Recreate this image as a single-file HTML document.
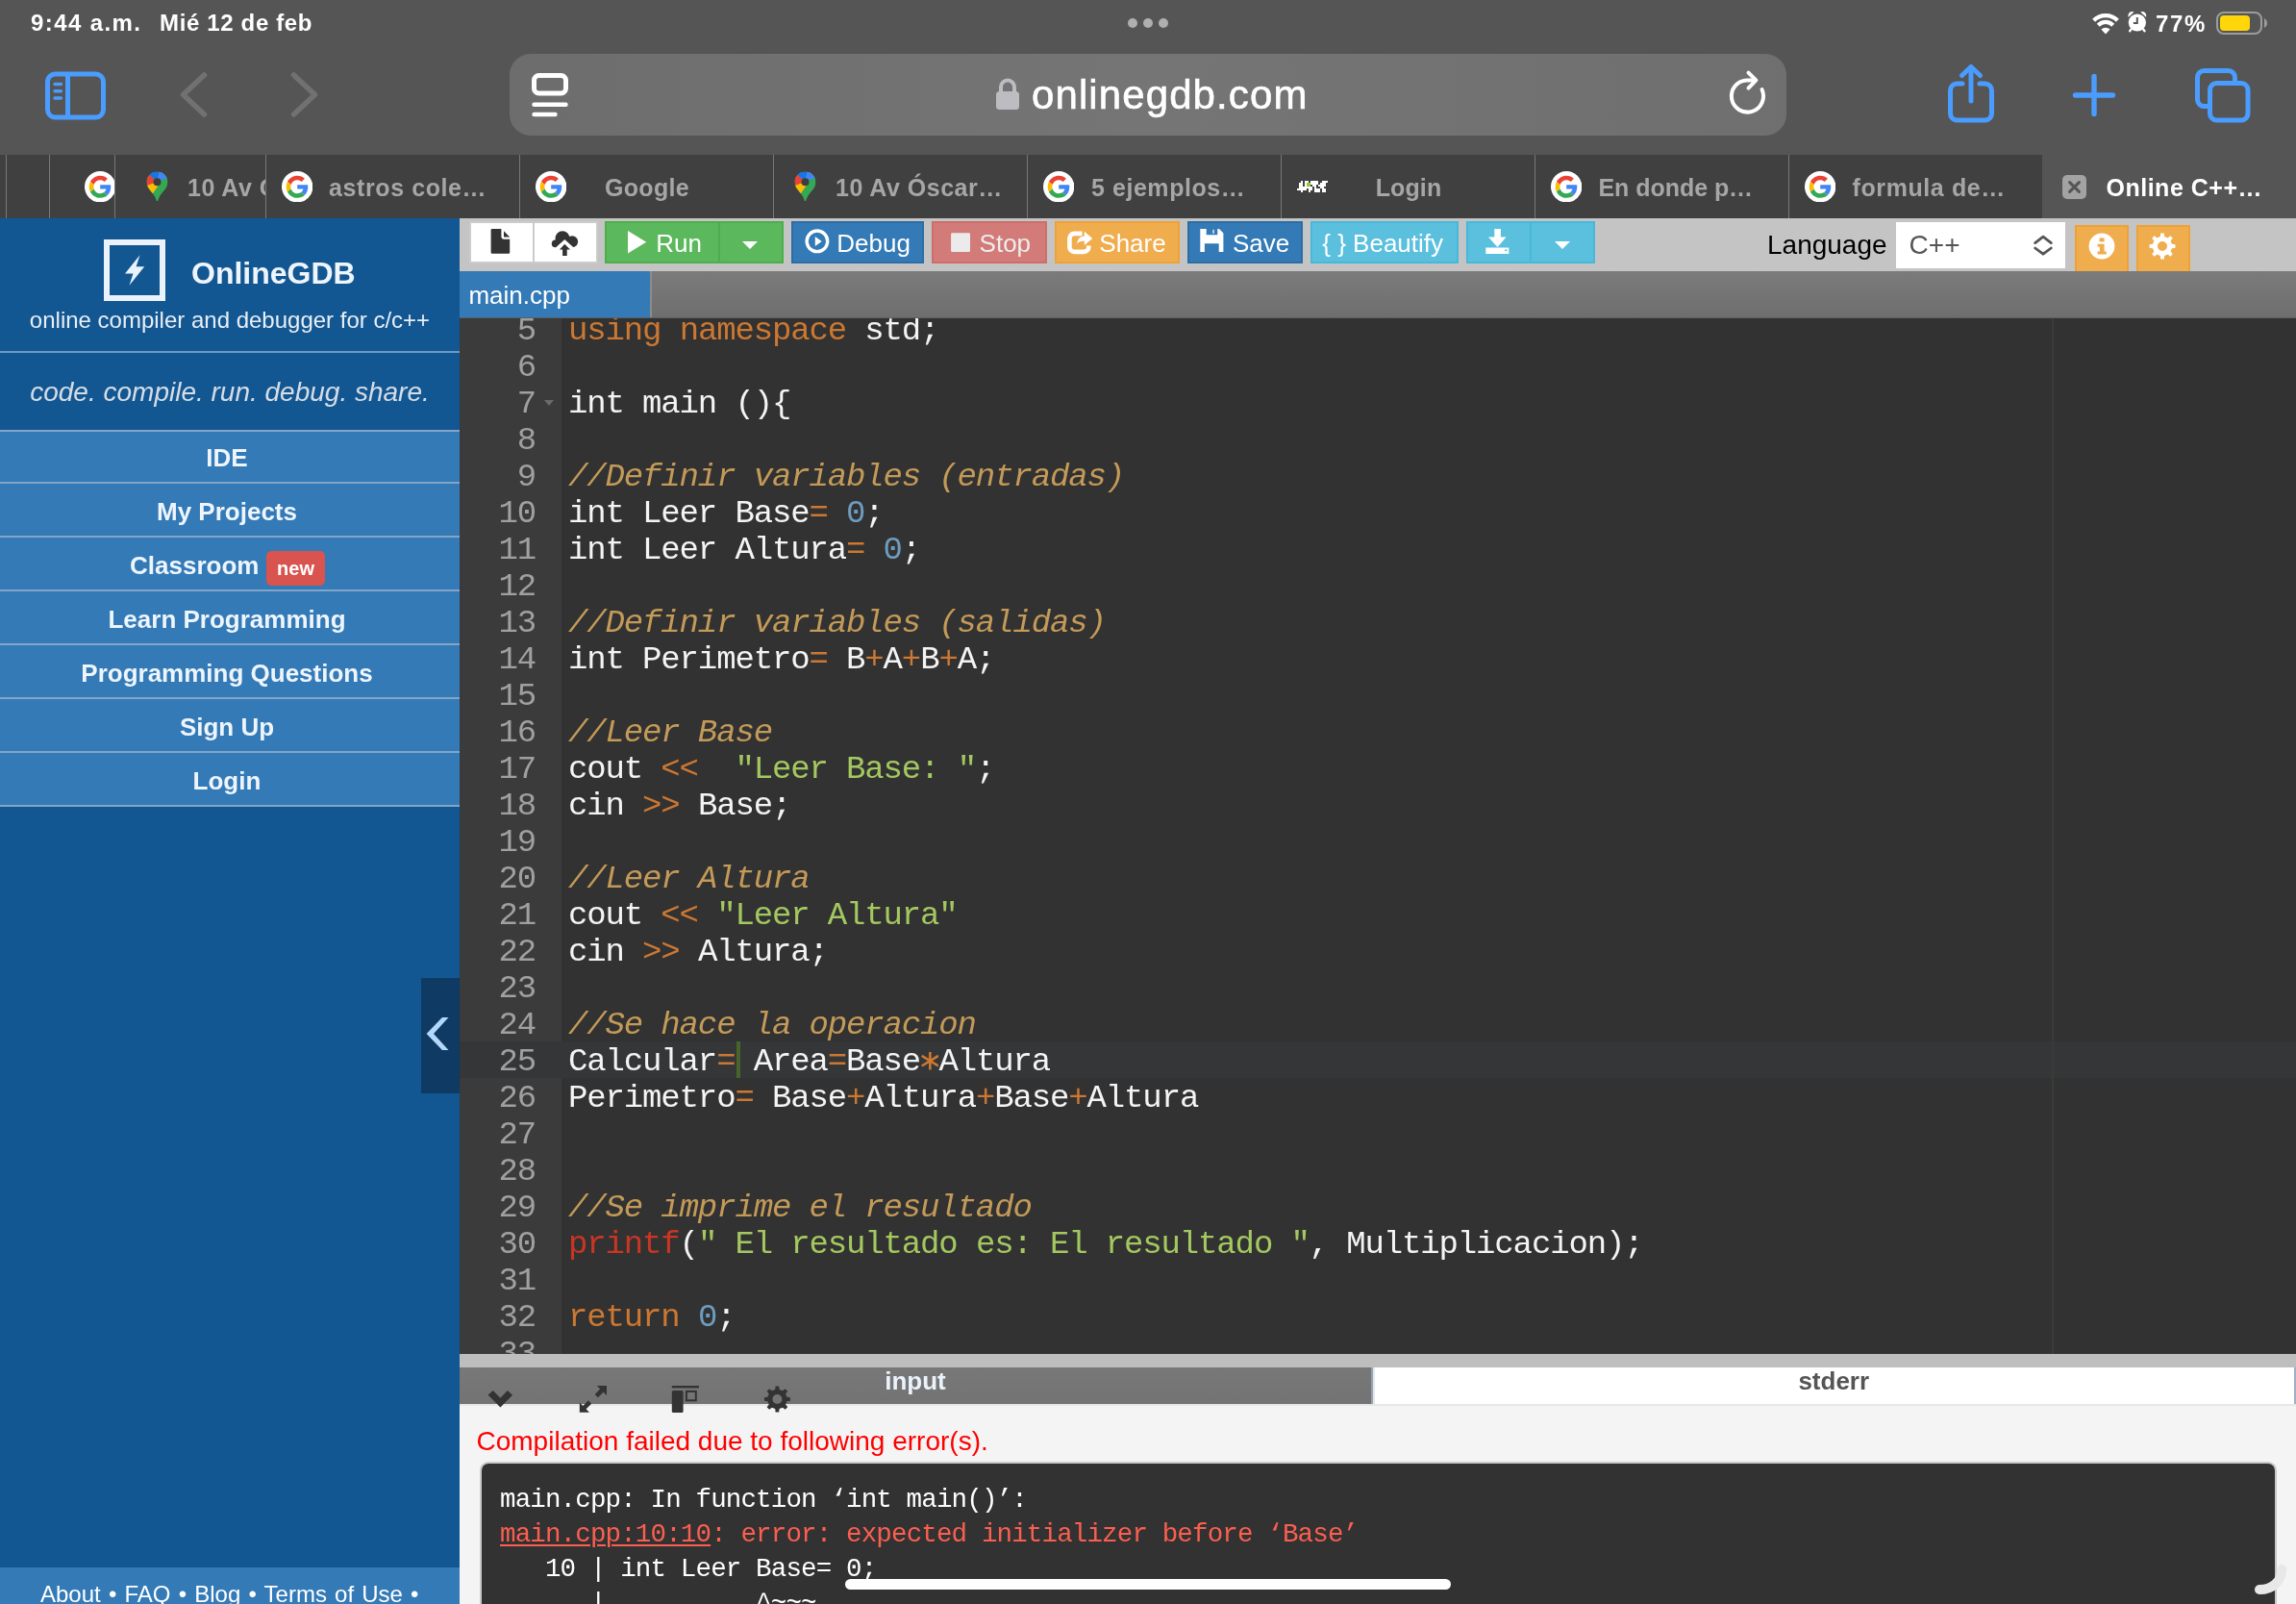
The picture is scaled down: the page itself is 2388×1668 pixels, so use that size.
<!DOCTYPE html>
<html>
<head>
<meta charset="utf-8">
<title>Online C++ Compiler</title>
<style>
*{box-sizing:border-box;margin:0;padding:0}
html,body{width:2388px;height:1668px;overflow:hidden;background:#555555;font-family:"Liberation Sans",sans-serif;}
.abs{position:absolute}
#root{will-change:transform;position:absolute;left:0;top:0;width:2388px;height:1668px;overflow:hidden;background:#555555}
/* ---------- status bar ---------- */
.st{position:absolute;color:#fff;font-weight:bold;font-size:24px;line-height:30px;white-space:nowrap}
/* ---------- safari toolbar ---------- */
#urlbar{position:absolute;left:530px;top:56px;width:1328px;height:85px;border-radius:22px;background:linear-gradient(90deg,#6d6d6d 0%,#757575 50%,#6f6f6f 100%)}
#urltext{position:absolute;left:1073px;top:69px;color:#fff;font-size:42px;line-height:60px;white-space:nowrap;letter-spacing:1.1px;-webkit-text-stroke:0.6px #fff}
/* ---------- tab bar ---------- */
#tabbar{position:absolute;left:0;top:161px;width:2388px;height:66px;background:#404040}
.tab{position:absolute;top:0;height:66px;border-left:1px solid #787878;overflow:hidden}
.tab .t{position:absolute;top:16px;font-weight:bold;font-size:25px;line-height:36px;color:#a6a6a6;white-space:nowrap}
.tab svg{position:absolute}
/* ---------- sidebar ---------- */
#side{position:absolute;left:0;top:227px;width:478px;height:1441px;background:#135792;color:#fff}
.nav{position:absolute;left:0;width:478px;height:56px;background:#337ab7;border-top:2px solid #6c9bc7;text-align:center;font-weight:bold;font-size:26px;line-height:52px;color:#fff;white-space:nowrap}
/* ---------- main ---------- */
#tool{position:absolute;left:478px;top:227px;width:1910px;height:55px;background:#c4c4c4;overflow:hidden}
.btn{position:absolute;top:3px;height:44px;border:2px solid;color:#fff;font-size:26px;line-height:40px;white-space:nowrap}
.btn span{position:absolute;top:0}
.btn svg{position:absolute}
#ftabs{position:absolute;left:478px;top:282px;width:1910px;height:49px;background:linear-gradient(#7b7b7b,#6e6e6e);border-bottom:1px solid #5a5f66}
#editor{position:absolute;left:478px;top:331px;width:1910px;height:1077px;background:#323232;overflow:hidden}
#gutter{position:absolute;left:0;top:0;width:106px;height:1077px;background:#3b3b3b}
.ln{position:absolute;left:0;width:79px;text-align:right;font-family:"Liberation Mono",monospace;font-size:34px;letter-spacing:-1.2px;line-height:38px;color:#a0a0a0;height:38px}
.cl{position:absolute;left:113px;font-family:"Liberation Mono",monospace;font-size:34px;letter-spacing:-1.137px;line-height:38px;color:#f4f4f4;white-space:pre;height:38px}
.k{color:#cc7832}.c{color:#c39a58;font-style:italic}.s{color:#a4c860}.n{color:#6d9cbe}.f{color:#cb3523}
/* ---------- console ---------- */
#split{position:absolute;left:478px;top:1408px;width:1910px;height:14px;background:#bebebe}
#chead{position:absolute;left:478px;top:1422px;width:1910px;height:38px;background:linear-gradient(#787878,#737373)}
#cons{position:absolute;left:478px;top:1460px;width:1910px;height:208px;background:#f4f4f4}
#pre{position:absolute;left:21px;top:60px;width:1869px;height:200px;background:#323232;border:2px solid #c9c9c9;border-radius:9px}
.pl{position:absolute;left:19px;font-family:"Liberation Mono",monospace;font-size:27.5px;line-height:36px;color:#fff;white-space:pre}
</style>
</head>
<body>
<div id="root">

<!-- STATUS BAR -->
<div class="st" style="left:32px;top:9px;letter-spacing:1.4px">9:44 a.m.</div>
<div class="st" style="left:166px;top:9px;letter-spacing:0.65px">Mié 12 de feb</div>
<div class="st" style="left:2242px;top:9.5px;letter-spacing:1.6px">77%</div>
<!--STATUSICONS-->
<div class="abs" style="left:1173px;top:19px;width:10px;height:10px;border-radius:5px;background:#afafaf"></div>
<div class="abs" style="left:1189px;top:19px;width:10px;height:10px;border-radius:5px;background:#afafaf"></div>
<div class="abs" style="left:1205px;top:19px;width:10px;height:10px;border-radius:5px;background:#afafaf"></div>
<!-- wifi -->
<svg class="abs" style="left:2174px;top:12px" width="32" height="26" viewBox="0 0 32 26">
<g fill="none" stroke="#fff" stroke-width="4.2">
<path d="M3.6 9.2 A17.6 17.6 0 0 1 28.4 9.2"/>
<path d="M8.3 14.2 A10.8 10.8 0 0 1 23.7 14.2"/>
</g>
<path d="M16 23.4 L11.4 18.6 A6.5 6.5 0 0 1 20.6 18.6 Z" fill="#fff"/>
</svg>
<!-- alarm -->
<svg class="abs" style="left:2212px;top:10.700px" width="22" height="24" viewBox="0 0 22 24">
<circle cx="10.850" cy="12.500" r="9.100" fill="#fff"/>
<path d="M1.500 7.100 A4.400 4.400 0 0 1 7.500 1.600 Z" fill="#fff"/>
<path d="M20.200 7.100 A4.400 4.400 0 0 0 14.200 1.600 Z" fill="#fff"/>
<path d="M4.600 19.400 L3.200 21.300" stroke="#fff" stroke-width="2.400" stroke-linecap="round"/>
<path d="M17.100 19.400 L18.500 21.300" stroke="#fff" stroke-width="2.400" stroke-linecap="round"/>
<path d="M10.800 7 V13.100 H6.900" stroke="#555" stroke-width="2" fill="none"/>
</svg>
<!-- battery -->
<div class="abs" style="left:2305px;top:12px;width:48px;height:24px;border:2px solid #9c9c9c;border-radius:8px"></div>
<div class="abs" style="left:2309px;top:16px;width:31px;height:16px;border-radius:4px;background:#ffd60a"></div>
<svg class="abs" style="left:2355px;top:19px" width="4" height="10" viewBox="0 0 4 10"><path d="M0 0 C4 2 4 8 0 10 Z" fill="#9c9c9c"/></svg>
<!--/STATUSICONS-->

<!-- SAFARI TOOLBAR -->
<div id="urlbar"></div>
<div id="urltext">onlinegdb.com</div>
<!--TOOLBARICONS-->
<!-- sidebar icon -->
<svg class="abs" style="left:45px;top:72px" width="68" height="56" viewBox="0 0 68 56">
<rect x="4.5" y="5" width="58" height="45" rx="8" fill="none" stroke="#4a9cff" stroke-width="5"/>
<path d="M25.5 5 V50" stroke="#4a9cff" stroke-width="5"/>
<path d="M12 15.5 H18.5 M12 22.7 H18.5 M12 30 H18.5" stroke="#4a9cff" stroke-width="3.4" stroke-linecap="round"/>
</svg>
<!-- back / forward -->
<svg class="abs" style="left:184px;top:70px" width="36" height="58" viewBox="0 0 36 58"><path d="M28.5 8 L6.5 28.5 L28.5 49" fill="none" stroke="#717171" stroke-width="5.5" stroke-linecap="round" stroke-linejoin="round"/></svg>
<svg class="abs" style="left:298px;top:70px" width="36" height="58" viewBox="0 0 36 58"><path d="M7.5 8 L29.5 28.5 L7.5 49" fill="none" stroke="#717171" stroke-width="5.5" stroke-linecap="round" stroke-linejoin="round"/></svg>
<!-- reader icon -->
<svg class="abs" style="left:550px;top:73px" width="44" height="52" viewBox="0 0 44 52">
<rect x="5.5" y="5.5" width="33" height="18.5" rx="5" fill="none" stroke="#fff" stroke-width="5"/>
<path d="M5.5 35.7 H38.5" stroke="#fff" stroke-width="4.4" stroke-linecap="round"/>
<path d="M5.5 46 H27.5" stroke="#fff" stroke-width="4.4" stroke-linecap="round"/>
</svg>
<!-- lock -->
<svg class="abs" style="left:1034px;top:79px" width="28" height="38" viewBox="0 0 28 38">
<path d="M7 18 V11.5 A7 7 0 0 1 21 11.5 V18" fill="none" stroke="#bcbcc1" stroke-width="4"/>
<rect x="2" y="16" width="24" height="19" rx="3.5" fill="#bcbcc1"/>
</svg>
<!-- reload -->
<svg class="abs" style="left:1792px;top:70px" width="50" height="54" viewBox="0 0 50 54">
<path d="M40.6 23.2 A16.6 16.6 0 1 1 24.4 13.4 H33" fill="none" stroke="#fff" stroke-width="4" stroke-linecap="round"/>
<path d="M26.5 5.6 L34.4 13.4 L26.5 21.6" fill="none" stroke="#fff" stroke-width="4" stroke-linecap="round" stroke-linejoin="round"/>
</svg>
<!-- share -->
<svg class="abs" style="left:2022px;top:63px" width="56" height="68" viewBox="0 0 56 68">
<path d="M19 24 H13.5 A7 7 0 0 0 6.5 31 V55 A7 7 0 0 0 13.5 62 H42.5 A7 7 0 0 0 49.500 55 V31 A7 7 0 0 0 42.5 24 H37" fill="none" stroke="#4a9cff" stroke-width="5" stroke-linecap="round"/>
<path d="M28 42 V7" stroke="#4a9cff" stroke-width="5" stroke-linecap="round"/>
<path d="M18.5 15.500 L28 6.5 L37.5 15.500" fill="none" stroke="#4a9cff" stroke-width="5" stroke-linecap="round" stroke-linejoin="round"/>
</svg>
<!-- plus -->
<svg class="abs" style="left:2154px;top:75px" width="48" height="48" viewBox="0 0 48 48"><path d="M4.500 24 H43.500 M24 4.500 V43.500" stroke="#4a9cff" stroke-width="5.4" stroke-linecap="round"/></svg>
<!-- tabs -->
<svg class="abs" style="left:2280px;top:68px" width="64" height="62" viewBox="0 0 64 62">
<path d="M18 42.5 H12.500 A7 7 0 0 1 5.500 35.500 V12.500 A7 7 0 0 1 12.500 5.500 H37.500 A7 7 0 0 1 44.500 12.500 V16" fill="none" stroke="#4a9cff" stroke-width="5"/>
<rect x="18.500" y="18.500" width="39.500" height="38.500" rx="7" fill="none" stroke="#4a9cff" stroke-width="5"/>
</svg>
<!--/TOOLBARICONS-->

<!-- TAB BAR -->
<div id="tabbar">
<!--TABS-->
<div class="tab" style="left:6px;width:46px;"></div>
<div class="tab" style="left:51px;width:69px;"><svg style="left:36px;top:17px" width="32.400" height="32.400" viewBox="0 0 66 66"><circle cx="33" cy="33" r="33" fill="#fff"/><g transform="translate(9.5 9.5) scale(0.98)">
<path fill="#EA4335" d="M24 9.500c3.540 0 6.710 1.220 9.210 3.600l6.850-6.850C35.900 2.380 30.470 0 24 0 14.620 0 6.510 5.380 2.560 13.220l7.980 6.190C12.430 13.720 17.740 9.500 24 9.500z"/>
<path fill="#4285F4" d="M46.980 24.550c0-1.570-.150-3.090-.380-4.550H24v9.020h12.940c-.580 2.960-2.260 5.480-4.780 7.180l7.730 6c4.510-4.180 7.090-10.360 7.090-17.650z"/>
<path fill="#FBBC05" d="M10.530 28.590c-.480-1.450-.760-2.990-.760-4.590s.270-3.140.760-4.590l-7.980-6.190C.920 16.460 0 20.120 0 24c0 3.880.920 7.540 2.560 10.780l7.970-6.190z"/>
<path fill="#34A853" d="M24 48c6.480 0 11.930-2.130 15.890-5.810l-7.730-6c-2.150 1.450-4.920 2.300-8.160 2.300-6.260 0-11.570-4.220-13.470-9.910l-7.980 6.190C6.510 42.620 14.620 48 24 48z"/>
</g></svg></div>
<div class="tab" style="left:119px;width:158px;"><svg style="left:32px;top:17px" width="23" height="32" viewBox="0 0 46 64">
<defs><clipPath id="pc1"><path d="M23 1 C10.500 1 1 10.800 1 22.500 C1 31 5.500 36.500 10.500 42.500 C16 49 19.500 54 21.200 61 C21.600 62.600 24.400 62.600 24.800 61 C26.500 54 30 49 35.500 42.500 C40.500 36.500 45 31 45 22.500 C45 10.800 35.500 1 23 1 Z"/></clipPath></defs>
<g clip-path="url(#pc1)">
<rect x="0" y="0" width="46" height="64" fill="#34A853"/>
<path d="M23 21.500 L-2 31 L-2 58 L5.500 58 L28.500 25.500 Z" fill="#FBBC04"/>
<path d="M23 21.500 L-2 31.500 L-2 1 Z" fill="#EA4335"/>
<path d="M23 21.500 L-2 0.500 L-2 -2 L28 -2 Z" fill="#1A73E8"/>
<path d="M23 21.500 L28 -2 L48 -2 L48 12.600 Z" fill="#4285F4"/>
</g>
<circle cx="23" cy="22.500" r="8" fill="#3d3d3d"/>
</svg><div class="t" style="left:75px;letter-spacing:0.5px">10 Av Óscar…</div></div>
<div class="tab" style="left:276px;width:264px;"><svg style="left:16px;top:17px" width="32.400" height="32.400" viewBox="0 0 66 66"><circle cx="33" cy="33" r="33" fill="#fff"/><g transform="translate(9.5 9.5) scale(0.98)">
<path fill="#EA4335" d="M24 9.500c3.540 0 6.710 1.220 9.210 3.600l6.850-6.850C35.900 2.380 30.470 0 24 0 14.620 0 6.510 5.380 2.560 13.220l7.980 6.190C12.430 13.720 17.740 9.500 24 9.500z"/>
<path fill="#4285F4" d="M46.980 24.550c0-1.570-.150-3.090-.380-4.550H24v9.020h12.940c-.580 2.960-2.260 5.480-4.780 7.180l7.730 6c4.510-4.180 7.090-10.360 7.090-17.650z"/>
<path fill="#FBBC05" d="M10.530 28.590c-.480-1.450-.760-2.990-.760-4.590s.270-3.140.760-4.590l-7.980-6.190C.920 16.460 0 20.120 0 24c0 3.880.920 7.540 2.560 10.780l7.970-6.190z"/>
<path fill="#34A853" d="M24 48c6.480 0 11.930-2.130 15.890-5.810l-7.730-6c-2.150 1.450-4.920 2.300-8.160 2.300-6.260 0-11.570-4.220-13.470-9.910l-7.980 6.190C6.510 42.620 14.620 48 24 48z"/>
</g></svg><div class="t" style="left:65px;letter-spacing:0.6px">astros cole…</div></div>
<div class="tab" style="left:540px;width:264px;"><svg style="left:16px;top:17px" width="32.400" height="32.400" viewBox="0 0 66 66"><circle cx="33" cy="33" r="33" fill="#fff"/><g transform="translate(9.5 9.5) scale(0.98)">
<path fill="#EA4335" d="M24 9.500c3.540 0 6.710 1.220 9.210 3.600l6.850-6.850C35.900 2.380 30.470 0 24 0 14.620 0 6.510 5.380 2.560 13.220l7.980 6.190C12.430 13.720 17.740 9.500 24 9.500z"/>
<path fill="#4285F4" d="M46.980 24.550c0-1.570-.150-3.090-.380-4.550H24v9.020h12.940c-.580 2.960-2.260 5.480-4.780 7.180l7.730 6c4.510-4.180 7.090-10.360 7.090-17.650z"/>
<path fill="#FBBC05" d="M10.530 28.590c-.480-1.450-.760-2.990-.760-4.590s.270-3.140.760-4.590l-7.980-6.190C.920 16.460 0 20.120 0 24c0 3.880.920 7.540 2.560 10.780l7.970-6.190z"/>
<path fill="#34A853" d="M24 48c6.480 0 11.930-2.130 15.890-5.810l-7.730-6c-2.150 1.450-4.920 2.300-8.160 2.300-6.260 0-11.570-4.220-13.470-9.910l-7.980 6.190C6.510 42.620 14.620 48 24 48z"/>
</g></svg><div class="t" style="left:0;width:264px;text-align:center;letter-spacing:0.3px">Google</div></div>
<div class="tab" style="left:804px;width:264px;"><svg style="left:21px;top:17px" width="23" height="32" viewBox="0 0 46 64">
<defs><clipPath id="pc2"><path d="M23 1 C10.500 1 1 10.800 1 22.500 C1 31 5.500 36.500 10.500 42.500 C16 49 19.500 54 21.200 61 C21.600 62.600 24.400 62.600 24.800 61 C26.500 54 30 49 35.500 42.500 C40.500 36.500 45 31 45 22.500 C45 10.800 35.500 1 23 1 Z"/></clipPath></defs>
<g clip-path="url(#pc2)">
<rect x="0" y="0" width="46" height="64" fill="#34A853"/>
<path d="M23 21.500 L-2 31 L-2 58 L5.500 58 L28.500 25.500 Z" fill="#FBBC04"/>
<path d="M23 21.500 L-2 31.500 L-2 1 Z" fill="#EA4335"/>
<path d="M23 21.500 L-2 0.500 L-2 -2 L28 -2 Z" fill="#1A73E8"/>
<path d="M23 21.500 L28 -2 L48 -2 L48 12.600 Z" fill="#4285F4"/>
</g>
<circle cx="23" cy="22.500" r="8" fill="#3d3d3d"/>
</svg><div class="t" style="left:64px;letter-spacing:0.5px">10 Av Óscar…</div></div>
<div class="tab" style="left:1068px;width:264px;"><svg style="left:16px;top:17px" width="32.400" height="32.400" viewBox="0 0 66 66"><circle cx="33" cy="33" r="33" fill="#fff"/><g transform="translate(9.5 9.5) scale(0.98)">
<path fill="#EA4335" d="M24 9.500c3.540 0 6.710 1.220 9.210 3.600l6.850-6.850C35.900 2.380 30.470 0 24 0 14.620 0 6.510 5.380 2.560 13.220l7.980 6.190C12.430 13.720 17.740 9.500 24 9.500z"/>
<path fill="#4285F4" d="M46.980 24.550c0-1.570-.150-3.090-.380-4.550H24v9.020h12.940c-.580 2.960-2.260 5.480-4.780 7.180l7.730 6c4.510-4.180 7.090-10.360 7.090-17.650z"/>
<path fill="#FBBC05" d="M10.530 28.590c-.480-1.450-.760-2.990-.760-4.590s.270-3.140.760-4.590l-7.980-6.190C.920 16.460 0 20.120 0 24c0 3.880.920 7.540 2.560 10.780l7.970-6.190z"/>
<path fill="#34A853" d="M24 48c6.480 0 11.930-2.130 15.890-5.810l-7.730-6c-2.150 1.450-4.920 2.300-8.160 2.300-6.260 0-11.570-4.220-13.470-9.910l-7.980 6.190C6.510 42.620 14.620 48 24 48z"/>
</g></svg><div class="t" style="left:66px;letter-spacing:0.55px">5 ejemplos…</div></div>
<div class="tab" style="left:1332px;width:264px;"><svg style="left:15.500px;top:27px" width="32.400" height="12.200" viewBox="0 0 32 12" shape-rendering="crispEdges"><rect x="4" y="0" width="2.050" height="2.050" fill="#fff"/><rect x="8" y="0" width="2.050" height="2.050" fill="#fff"/><rect x="10" y="0" width="2.050" height="2.050" fill="#fff"/><rect x="14" y="0" width="2.050" height="2.050" fill="#fff"/><rect x="16" y="0" width="2.050" height="2.050" fill="#fff"/><rect x="18" y="0" width="2.050" height="2.050" fill="#fff"/><rect x="20" y="0" width="2.050" height="2.050" fill="#fff"/><rect x="26" y="0" width="2.050" height="2.050" fill="#fff"/><rect x="28" y="0" width="2.050" height="2.050" fill="#fff"/><rect x="30" y="0" width="2.050" height="2.050" fill="#fff"/><rect x="2" y="2" width="2.050" height="2.050" fill="#fff"/><rect x="4" y="2" width="2.050" height="2.050" fill="#fff"/><rect x="8" y="2" width="2.050" height="2.050" fill="#fff"/><rect x="10" y="2" width="2.050" height="2.050" fill="#9bc53d"/><rect x="12" y="2" width="2.050" height="2.050" fill="#9bc53d"/><rect x="14" y="2" width="2.050" height="2.050" fill="#fff"/><rect x="16" y="2" width="2.050" height="2.050" fill="#fff"/><rect x="18" y="2" width="2.050" height="2.050" fill="#fff"/><rect x="20" y="2" width="2.050" height="2.050" fill="#fff"/><rect x="24" y="2" width="2.050" height="2.050" fill="#fff"/><rect x="26" y="2" width="2.050" height="2.050" fill="#fff"/><rect x="28" y="2" width="2.050" height="2.050" fill="#fff"/><rect x="2" y="4" width="2.050" height="2.050" fill="#fff"/><rect x="4" y="4" width="2.050" height="2.050" fill="#fff"/><rect x="8" y="4" width="2.050" height="2.050" fill="#fff"/><rect x="10" y="4" width="2.050" height="2.050" fill="#9bc53d"/><rect x="12" y="4" width="2.050" height="2.050" fill="#9bc53d"/><rect x="16" y="4" width="2.050" height="2.050" fill="#fff"/><rect x="18" y="4" width="2.050" height="2.050" fill="#fff"/><rect x="22" y="4" width="2.050" height="2.050" fill="#fff"/><rect x="24" y="4" width="2.050" height="2.050" fill="#fff"/><rect x="26" y="4" width="2.050" height="2.050" fill="#fff"/><rect x="28" y="4" width="2.050" height="2.050" fill="#fff"/><rect x="2" y="6" width="2.050" height="2.050" fill="#fff"/><rect x="4" y="6" width="2.050" height="2.050" fill="#fff"/><rect x="6" y="6" width="2.050" height="2.050" fill="#fff"/><rect x="8" y="6" width="2.050" height="2.050" fill="#fff"/><rect x="10" y="6" width="2.050" height="2.050" fill="#fff"/><rect x="12" y="6" width="2.050" height="2.050" fill="#fff"/><rect x="14" y="6" width="2.050" height="2.050" fill="#fff"/><rect x="18" y="6" width="2.050" height="2.050" fill="#fff"/><rect x="24" y="6" width="2.050" height="2.050" fill="#fff"/><rect x="26" y="6" width="2.050" height="2.050" fill="#fff"/><rect x="0" y="8" width="2.050" height="2.050" fill="#fff"/><rect x="2" y="8" width="2.050" height="2.050" fill="#fff"/><rect x="4" y="8" width="2.050" height="2.050" fill="#fff"/><rect x="6" y="8" width="2.050" height="2.050" fill="#fff"/><rect x="8" y="8" width="2.050" height="2.050" fill="#fff"/><rect x="12" y="8" width="2.050" height="2.050" fill="#fff"/><rect x="14" y="8" width="2.050" height="2.050" fill="#fff"/><rect x="18" y="8" width="2.050" height="2.050" fill="#fff"/><rect x="20" y="8" width="2.050" height="2.050" fill="#fff"/><rect x="22" y="8" width="2.050" height="2.050" fill="#fff"/><rect x="26" y="8" width="2.050" height="2.050" fill="#fff"/><rect x="28" y="8" width="2.050" height="2.050" fill="#fff"/><rect x="4" y="10" width="2.050" height="2.050" fill="#fff"/><rect x="12" y="10" width="2.050" height="2.050" fill="#fff"/><rect x="18" y="10" width="2.050" height="2.050" fill="#fff"/><rect x="20" y="10" width="2.050" height="2.050" fill="#fff"/><rect x="22" y="10" width="2.050" height="2.050" fill="#fff"/><rect x="26" y="10" width="2.050" height="2.050" fill="#fff"/><rect x="28" y="10" width="2.050" height="2.050" fill="#fff"/></svg><div class="t" style="left:0;width:264px;text-align:center;letter-spacing:0.1px">Login</div></div>
<div class="tab" style="left:1596px;width:264px;"><svg style="left:16px;top:17px" width="32.400" height="32.400" viewBox="0 0 66 66"><circle cx="33" cy="33" r="33" fill="#fff"/><g transform="translate(9.5 9.5) scale(0.98)">
<path fill="#EA4335" d="M24 9.500c3.540 0 6.710 1.220 9.210 3.600l6.850-6.850C35.900 2.380 30.470 0 24 0 14.620 0 6.510 5.380 2.560 13.220l7.980 6.190C12.430 13.720 17.740 9.500 24 9.500z"/>
<path fill="#4285F4" d="M46.980 24.550c0-1.570-.150-3.090-.380-4.550H24v9.020h12.940c-.580 2.960-2.260 5.480-4.780 7.180l7.730 6c4.510-4.180 7.090-10.360 7.090-17.650z"/>
<path fill="#FBBC05" d="M10.530 28.590c-.480-1.450-.760-2.990-.760-4.590s.270-3.140.760-4.590l-7.980-6.190C.920 16.460 0 20.120 0 24c0 3.880.920 7.540 2.560 10.780l7.970-6.190z"/>
<path fill="#34A853" d="M24 48c6.480 0 11.930-2.130 15.890-5.810l-7.730-6c-2.150 1.450-4.920 2.300-8.160 2.300-6.260 0-11.570-4.220-13.470-9.910l-7.980 6.190C6.510 42.620 14.620 48 24 48z"/>
</g></svg><div class="t" style="left:65.5px;letter-spacing:-0.05px">En donde p…</div></div>
<div class="tab" style="left:1860px;width:264px;"><svg style="left:16px;top:17px" width="32.400" height="32.400" viewBox="0 0 66 66"><circle cx="33" cy="33" r="33" fill="#fff"/><g transform="translate(9.5 9.5) scale(0.98)">
<path fill="#EA4335" d="M24 9.500c3.540 0 6.710 1.220 9.210 3.600l6.850-6.850C35.900 2.380 30.470 0 24 0 14.620 0 6.510 5.380 2.560 13.220l7.980 6.190C12.430 13.720 17.740 9.500 24 9.500z"/>
<path fill="#4285F4" d="M46.980 24.550c0-1.570-.150-3.090-.380-4.550H24v9.020h12.940c-.580 2.960-2.260 5.480-4.780 7.180l7.730 6c4.510-4.180 7.090-10.360 7.090-17.650z"/>
<path fill="#FBBC05" d="M10.530 28.590c-.480-1.450-.760-2.990-.760-4.590s.270-3.140.760-4.590l-7.980-6.190C.920 16.460 0 20.120 0 24c0 3.880.920 7.540 2.560 10.780l7.970-6.190z"/>
<path fill="#34A853" d="M24 48c6.480 0 11.930-2.130 15.890-5.810l-7.730-6c-2.150 1.450-4.920 2.300-8.160 2.300-6.260 0-11.570-4.220-13.470-9.910l-7.980 6.190C6.510 42.620 14.620 48 24 48z"/>
</g></svg><div class="t" style="left:65.5px;letter-spacing:0.6px">formula de…</div></div>
<div class="tab" style="left:2124px;width:264px;background:#555555;border-left:none"><div class="abs" style="left:21px;top:21px;width:25px;height:25px;border-radius:5px;background:#a3a3a3"></div><svg style="left:21px;top:21px" width="25" height="25" viewBox="0 0 25 25"><path d="M7.600 7.600 L17.400 17.400 M17.400 7.600 L7.600 17.400" stroke="#555" stroke-width="3" stroke-linecap="round"/></svg><div class="t" style="left:66.5px;letter-spacing:0.5px;color:#fff">Online C++…</div></div>
<!--/TABS-->
</div>

<!-- SIDEBAR -->
<div id="side">
<!--SIDE-->
<div class="abs" style="left:108px;top:22px;width:64px;height:64px;border:6px solid #eaf3fc"></div>
<svg class="abs" style="left:108px;top:22px" width="64" height="64" viewBox="0 0 64 64"><path d="M37.500 16.200 L22 35.500 H30.500 L26.500 47.800 L42.200 28.300 H33.600 Z" fill="#eaf3fc"/></svg>
<div class="abs" style="left:199px;top:36.7px;font-weight:bold;font-size:32px;line-height:40px;color:#eef5fc;white-space:nowrap">OnlineGDB</div>
<div class="abs" style="left:0;top:90.5px;width:478px;text-align:center;font-size:24px;line-height:30px;color:#e8eef5;white-space:nowrap">online compiler and debugger for c/c++</div>
<div class="abs" style="left:0;top:138px;width:478px;height:2px;background:#6f98be"></div>
<div class="abs" style="left:0;top:164.3px;width:478px;text-align:center;font-style:italic;font-size:28px;line-height:34px;color:#d5dde6;white-space:nowrap">code. compile. run. debug. share.</div>
<div class="abs" style="left:0;top:220px;width:478px;height:392px;background:#337ab7"></div>
<div class="abs" style="left:0;top:220px;width:478px;height:2px;background:#82a5c8"></div>
<div class="abs" style="left:0;top:274px;width:478px;height:2px;background:#82a5c8"></div>
<div class="abs" style="left:0;top:330px;width:478px;height:2px;background:#82a5c8"></div>
<div class="abs" style="left:0;top:386px;width:478px;height:2px;background:#82a5c8"></div>
<div class="abs" style="left:0;top:442px;width:478px;height:2px;background:#82a5c8"></div>
<div class="abs" style="left:0;top:498px;width:478px;height:2px;background:#82a5c8"></div>
<div class="abs" style="left:0;top:554px;width:478px;height:2px;background:#82a5c8"></div>
<div class="abs" style="left:0;top:610px;width:478px;height:2px;background:#82a5c8"></div>
<div class="abs" style="left:-3px;top:223.2px;width:478px;text-align:center;font-weight:bold;font-size:26px;line-height:52px;color:#eef5fc;white-space:nowrap">IDE</div>
<div class="abs" style="left:-3px;top:279.2px;width:478px;text-align:center;font-weight:bold;font-size:26px;line-height:52px;color:#eef5fc;white-space:nowrap">My Projects</div>
<div class="abs" style="left:135px;top:335.2px;font-weight:bold;font-size:26px;line-height:52px;color:#eef5fc;white-space:nowrap">Classroom</div>
<div class="abs" style="left:277px;top:346px;width:61px;height:36px;border-radius:5px;background:#d9534f;color:#fff;font-weight:bold;font-size:20px;line-height:36px;text-align:center">new</div>
<div class="abs" style="left:-3px;top:391.2px;width:478px;text-align:center;font-weight:bold;font-size:26px;line-height:52px;color:#eef5fc;white-space:nowrap">Learn Programming</div>
<div class="abs" style="left:-3px;top:447.2px;width:478px;text-align:center;font-weight:bold;font-size:26px;line-height:52px;color:#eef5fc;white-space:nowrap">Programming Questions</div>
<div class="abs" style="left:-3px;top:503.2px;width:478px;text-align:center;font-weight:bold;font-size:26px;line-height:52px;color:#eef5fc;white-space:nowrap">Sign Up</div>
<div class="abs" style="left:-3px;top:559.2px;width:478px;text-align:center;font-weight:bold;font-size:26px;line-height:52px;color:#eef5fc;white-space:nowrap">Login</div>
<div class="abs" style="left:438px;top:790px;width:40px;height:120px;background:#0f3a63"></div>
<svg class="abs" style="left:438px;top:823px" width="40" height="50" viewBox="438 1050 40 50"><path d="M443.600 1074.900 L459.900 1058 H466.500 L451 1074.900 L466.500 1092.100 H459.900 Z" fill="#b3d8fc"/></svg>
<div class="abs" style="left:0;top:1403px;width:478px;height:38px;background:#337ab7"></div>
<div class="abs" style="left:42px;top:1416.3px;font-size:24px;line-height:30px;color:#fff;white-space:nowrap;word-spacing:1.5px">About • FAQ • Blog • Terms of Use •</div>
<!--/SIDE-->
</div>

<!-- TOOLBAR -->
<div id="tool">
<!--TOOL-->
<div class="abs" style="left:10px;top:3px;width:134px;height:44px;background:#cbcbcb"></div>
<div class="abs" style="left:12px;top:5px;width:64px;height:40px;background:#fff"></div>
<div class="abs" style="left:78px;top:5px;width:64px;height:40px;background:#fff"></div>
<svg class="abs" style="left:32px;top:10px" width="22" height="28" viewBox="0 0 22 28"><path d="M1.800 1 H11.400 V9.300 A2.400 2.400 0 0 0 13.800 11.700 H20.200 V25.600 A1.200 1.200 0 0 1 19 26.800 H1.800 A1.200 1.200 0 0 1 0.600 25.600 V2.200 A1.200 1.200 0 0 1 1.800 1 Z" fill="#333"/><path d="M14 3.200 L20.200 9.400 H14 Z" fill="#333"/></svg>
<svg class="abs" style="left:94px;top:11px" width="32" height="30" viewBox="0 0 32 30"><g fill="#333"><circle cx="13" cy="9.700" r="7.500"/><circle cx="23.100" cy="13.200" r="6"/><circle cx="5.700" cy="15.300" r="3.900"/><rect x="5.700" y="11" width="17.400" height="8.200"/></g><path d="M2 23 L15.300 11 L28.600 23 V30 H2 Z" fill="#fff"/><path d="M15.300 15.800 L21 21.500 H17.700 V28 H13.100 V21.500 H9.900 Z" fill="#333"/></svg>
<div class="btn" style="left:151px;top:3px;width:120px;height:44px;background:#5cb85c;border-color:#4cae4c;"><svg style="left:21.6px;top:8.4px" width="20" height="24" viewBox="0 0 20 24"><path d="M0 0 L19.200 11.700 L0 23.400 Z" fill="#fff"/></svg><span style="left:51.3px;line-height:42px;color:#fff">Run</span></div>
<div class="btn" style="left:269px;top:3px;width:68px;height:44px;background:#5cb85c;border-color:#4cae4c;"><div class="abs" style="left:23.400px;top:19px;border-left:8.200px solid transparent;border-right:8.200px solid transparent;border-top:8.200px solid #fff"></div></div>
<div class="btn" style="left:345px;top:3px;width:138px;height:44px;background:#337ab7;border-color:#2e6da4;"><svg style="left:11.0px;top:5.0px" width="28" height="28" viewBox="0 0 28 28"><circle cx="13.900" cy="13.850" r="10.800" fill="none" stroke="#fff" stroke-width="3.400"/><path d="M11.800 8.900 L18.700 13.900 L11.800 18.900 Z" fill="#fff"/></svg><span style="left:45.3px;line-height:42px;color:#fff">Debug</span></div>
<div class="btn" style="left:491px;top:3px;width:120px;height:44px;background:#d27b78;border-color:#ce6e6a;"><svg style="left:18.0px;top:10.0px" width="20" height="20" viewBox="0 0 20 20"><rect x="0.100" y="0.300" width="19.900" height="19.600" rx="1.200" fill="#ebebeb"/></svg><span style="left:47.6px;line-height:42px;color:#ededed">Stop</span></div>
<div class="btn" style="left:619px;top:3px;width:130px;height:44px;background:#f0ad4e;border-color:#eea236;"><svg style="left:11.0px;top:7.6px" width="28" height="28" viewBox="0 0 28 28"><path d="M15.500 2.900 H7.400 A5 5 0 0 0 2.400 7.900 V16.900 A5 5 0 0 0 7.400 21.900 H17.300 A5 5 0 0 0 22.300 16.900 V15.600" fill="none" stroke="#fff" stroke-width="4.600"/><path d="M17.800 0.800 L26.200 8 L17.800 15.100 V10.600 C14.500 10.600 12 11.400 10.200 13.600 C10.600 8.600 13.500 5.600 17.800 5.400 Z" fill="#fff"/></svg><span style="left:44.3px;line-height:42px;color:#fff">Share</span></div>
<div class="btn" style="left:757px;top:3px;width:120px;height:44px;background:#337ab7;border-color:#2e6da4;"><svg style="left:11.0px;top:6.0px" width="26" height="26" viewBox="0 0 26 26"><path d="M0.300 0 H20 L24.400 4.400 V23.900 H0.300 Z M6.700 0 V6.200 H18.300 V0 Z M4.900 15.300 V23.900 H19.700 V15.300 Z" fill="#fff" fill-rule="evenodd"/><rect x="13.400" y="0.800" width="1.300" height="4" fill="#fff"/></svg><span style="left:45.0px;line-height:42px;color:#fff">Save</span></div>
<div class="btn" style="left:885px;top:3px;width:154px;height:44px;background:#5bc0de;border-color:#46b8da;"><span style="left:10.3px;line-height:42px;color:#fff">{ } Beautify</span></div>
<div class="btn" style="left:1047px;top:3px;width:68px;height:44px;background:#5bc0de;border-color:#46b8da;"><svg style="left:18.0px;top:6.0px" width="26" height="28" viewBox="0 0 26 28"><path d="M9.300 0 H15.900 V8.600 H21.600 L12.500 19 L3 8.600 H9.300 Z" fill="#fff"/><path d="M0.300 19.400 H24.300 V26.100 H0.300 Z M20 21.600 V23 H22.500 V21.600 Z" fill="#fff" fill-rule="evenodd"/></svg></div>
<div class="btn" style="left:1113px;top:3px;width:68px;height:44px;background:#5bc0de;border-color:#46b8da;"><div class="abs" style="left:23.900px;top:19px;border-left:8.200px solid transparent;border-right:8.200px solid transparent;border-top:8.200px solid #fff"></div></div>
<div class="abs" style="left:1360px;top:9.8px;font-size:28px;line-height:36px;color:#000;white-space:nowrap">Language</div>
<div class="abs" style="left:1494px;top:4px;width:176px;height:48px;background:#fff"></div>
<div class="abs" style="left:1507.6px;top:10.3px;font-size:28px;line-height:36px;color:#555;white-space:nowrap">C++</div>
<svg class="abs" style="left:1635px;top:15px" width="24" height="26" viewBox="0 0 24 26"><path d="M3.700 10.600 L12 4.200 L20.300 10.600 M3.700 16 L12 22.200 L20.300 16" fill="none" stroke="#555" stroke-width="2.800" stroke-linecap="round" stroke-linejoin="round"/></svg>
<div class="btn" style="left:1680px;top:7px;width:56px;height:50px;background:#f0ad4e;border-color:#eea236;"><svg style="left:12.0px;top:5.8px" width="28" height="28" viewBox="0 0 28 28"><circle cx="14" cy="14" r="13.400" fill="#fff"/><rect x="11.600" y="5.400" width="5" height="4" fill="#f0ad4e"/><path d="M9.600 11.800 H16.600 V19.600 H18.800 V22.400 H9.600 V19.600 H11.800 V14.600 H9.600 Z" fill="#f0ad4e"/></svg></div>
<div class="btn" style="left:1744px;top:7px;width:56px;height:50px;background:#f0ad4e;border-color:#eea236;"><svg style="left:11.4px;top:5.8px" width="28" height="28" viewBox="0 0 28 28"><path fill="#fff" fill-rule="evenodd" d="M11.85 4.03 L12.19 0.52 L15.81 0.52 L16.15 4.03 L19.53 5.43 L22.25 3.19 L24.81 5.75 L22.57 8.47 L23.97 11.85 L27.48 12.19 L27.48 15.81 L23.97 16.15 L22.57 19.53 L24.81 22.25 L22.25 24.81 L19.53 22.57 L16.15 23.97 L15.81 27.48 L12.19 27.48 L11.85 23.97 L8.47 22.57 L5.75 24.81 L3.19 22.25 L5.43 19.53 L4.03 16.15 L0.52 15.81 L0.52 12.19 L4.03 11.85 L5.43 8.47 L3.19 5.75 L5.75 3.19 L8.47 5.43 Z M9.00 14.00 A5 5 0 1 0 19.00 14.00 A5 5 0 1 0 9.00 14.00 Z"/></svg></div>
<!--/TOOL-->
</div>
<div id="ftabs">
<!--FTABS-->
<div class="abs" style="left:0;top:0;width:198px;height:48px;background:#337ab7"></div>
<div class="abs" style="left:198px;top:0;width:2px;height:48px;background:#8c8c8c"></div>
<div class="abs" style="left:9.4px;top:6.6px;font-size:26px;line-height:36px;color:#fff;white-space:nowrap">main.cpp</div>
<!--/FTABS-->
</div>

<!-- EDITOR -->
<div id="editor">
<div id="gutter"></div>
<!--EDITOR-->
<div class="abs" style="left:0;top:752px;width:1910px;height:38px;background:#343638"></div>
<div class="abs" style="left:0;top:752px;width:106px;height:38px;background:#353637"></div>
<div class="abs" style="left:1656px;top:0;width:2px;height:1077px;background:#3a3a3a"></div>
<div class="ln" style="top:-6px">5</div>
<div class="cl" style="top:-6px"><span class="k">using</span> <span class="k">namespace</span> std;</div>
<div class="ln" style="top:32px">6</div>
<div class="ln" style="top:70px">7</div>
<div class="cl" style="top:70px">int main (){</div>
<div class="ln" style="top:108px">8</div>
<div class="ln" style="top:146px">9</div>
<div class="cl" style="top:146px"><span class="c">//Definir variables (entradas)</span></div>
<div class="ln" style="top:184px">10</div>
<div class="cl" style="top:184px">int Leer Base<span class="k">=</span> <span class="n">0</span>;</div>
<div class="ln" style="top:222px">11</div>
<div class="cl" style="top:222px">int Leer Altura<span class="k">=</span> <span class="n">0</span>;</div>
<div class="ln" style="top:260px">12</div>
<div class="ln" style="top:298px">13</div>
<div class="cl" style="top:298px"><span class="c">//Definir variables (salidas)</span></div>
<div class="ln" style="top:336px">14</div>
<div class="cl" style="top:336px">int Perimetro<span class="k">=</span> B<span class="k">+</span>A<span class="k">+</span>B<span class="k">+</span>A;</div>
<div class="ln" style="top:374px">15</div>
<div class="ln" style="top:412px">16</div>
<div class="cl" style="top:412px"><span class="c">//Leer Base</span></div>
<div class="ln" style="top:450px">17</div>
<div class="cl" style="top:450px">cout <span class="k">&lt;&lt;</span>  <span class="s">"Leer Base: "</span>;</div>
<div class="ln" style="top:488px">18</div>
<div class="cl" style="top:488px">cin <span class="k">&gt;&gt;</span> Base;</div>
<div class="ln" style="top:526px">19</div>
<div class="ln" style="top:564px">20</div>
<div class="cl" style="top:564px"><span class="c">//Leer Altura</span></div>
<div class="ln" style="top:602px">21</div>
<div class="cl" style="top:602px">cout <span class="k">&lt;&lt;</span> <span class="s">"Leer Altura"</span></div>
<div class="ln" style="top:640px">22</div>
<div class="cl" style="top:640px">cin <span class="k">&gt;&gt;</span> Altura;</div>
<div class="ln" style="top:678px">23</div>
<div class="ln" style="top:716px">24</div>
<div class="cl" style="top:716px"><span class="c">//Se hace la operacion</span></div>
<div class="ln" style="top:754px">25</div>
<div class="cl" style="top:754px">Calcular<span class="k">=</span> Area<span class="k">=</span>Base<svg width="19.260" height="38" viewBox="0 0 19.2 38" style="vertical-align:top"><path d="M10.300 8.900 V27.600 M1.700 12.900 L18.900 23.500 M1.700 23.500 L18.900 12.900" stroke="#cc7832" stroke-width="2.600" fill="none"/></svg>Altura</div>
<div class="ln" style="top:792px">26</div>
<div class="cl" style="top:792px">Perimetro<span class="k">=</span> Base<span class="k">+</span>Altura<span class="k">+</span>Base<span class="k">+</span>Altura</div>
<div class="ln" style="top:830px">27</div>
<div class="ln" style="top:868px">28</div>
<div class="ln" style="top:906px">29</div>
<div class="cl" style="top:906px"><span class="c">//Se imprime el resultado</span></div>
<div class="ln" style="top:944px">30</div>
<div class="cl" style="top:944px"><span class="f">printf</span>(<span class="s">" El resultado es: El resultado "</span>, Multiplicacion);</div>
<div class="ln" style="top:982px">31</div>
<div class="ln" style="top:1020px">32</div>
<div class="cl" style="top:1020px"><span class="k">return</span> <span class="n">0</span>;</div>
<div class="ln" style="top:1058px">33</div>
<div class="abs" style="left:88px;top:85px;width:0;height:0;border-left:5px solid transparent;border-right:5px solid transparent;border-top:6px solid #6a6a6a"></div>
<div class="abs" id="cursor" style="left:287.6px;top:752px;width:4px;height:38px;background:#47652a"></div>
<!--/EDITOR-->
</div>

<!-- CONSOLE -->
<div id="split"></div>
<div id="chead">
<!--CHEAD-->
<div class="abs" style="left:948px;top:0;width:2px;height:38px;background:#93a3b5"></div>
<div class="abs" style="left:950px;top:0;width:2px;height:38px;background:#e4e6e8"></div>
<div class="abs" style="left:952px;top:0;width:956px;height:38px;background:#fff"></div>
<div class="abs" style="left:1908px;top:0;width:2px;height:38px;background:#9fb0c4"></div>
<div class="abs" style="left:442.2px;top:-3.7px;font-weight:bold;font-size:26px;line-height:36px;color:#eaf2fb;white-space:nowrap">input</div>
<div class="abs" style="left:1392.4px;top:-3.7px;font-weight:bold;font-size:26px;line-height:36px;color:#555;white-space:nowrap">stderr</div>
<!--/CHEAD-->
</div>
<div id="cons">
<!--CONS-->
<div class="abs" style="left:0;top:0;width:1910px;height:2px;background:#e6e6e6"></div>
<div class="abs" style="left:17.5px;top:20.7px;font-size:28px;line-height:36px;color:#ff0000;white-space:nowrap">Compilation failed due to following error(s).</div>
<div id="pre"><div class="pl" style="left:19px;top:19.7px;color:#fff;letter-spacing:-0.85px">main.cpp: In function ‘int main()’:</div><div class="pl" style="left:19px;top:55.9px;color:#fb5f50;letter-spacing:-0.85px"><span style="text-decoration:underline;text-decoration-thickness:2px;text-underline-offset:3px">main.cpp:10:10</span>: error: expected initializer before ‘Base’</div><div class="pl" style="left:19px;top:91.7px;color:#fff;letter-spacing:-0.85px">   10 | int Leer Base= 0;</div><div class="pl" style="left:19px;top:127.7px;color:#fff;letter-spacing:-0.85px">      |          ^~~~</div></div>
<!--/CONS-->
</div>

<!--OVERLAY-->
<svg class="abs" style="left:500px;top:1436px" width="340" height="40" viewBox="500 1436 340 40"><path d="M507.500 1450.600 L512.800 1445.900 L520.400 1453.800 L527.900 1445.900 L533.100 1450.800 L520.400 1463.400 Z" fill="#333"/><path d="M620.800 1440.900 H631 V1451.100 Z M602.800 1458.600 V1468.800 H613 Z" fill="#333"/><path d="M627.400 1444.500 L620.300 1451.600 M606.400 1465.200 L613.600 1458" stroke="#333" stroke-width="4.600"/><rect x="698.800" y="1441" width="28.200" height="2.400" fill="#333"/><rect x="698.800" y="1445.900" width="11.800" height="23.200" rx="1.500" fill="#333"/><rect x="713.900" y="1446.900" width="9.900" height="9.400" fill="none" stroke="#333" stroke-width="2"/><path fill="#333" fill-rule="evenodd" d="M806.23 1444.93 L806.59 1441.52 L810.21 1441.52 L810.57 1444.93 L813.99 1446.35 L816.65 1444.19 L819.21 1446.75 L817.05 1449.41 L818.47 1452.83 L821.88 1453.19 L821.88 1456.81 L818.47 1457.17 L817.05 1460.59 L819.21 1463.25 L816.65 1465.81 L813.99 1463.65 L810.57 1465.07 L810.21 1468.48 L806.59 1468.48 L806.23 1465.07 L802.81 1463.65 L800.15 1465.81 L797.59 1463.25 L799.75 1460.59 L798.33 1457.17 L794.92 1456.81 L794.92 1453.19 L798.33 1452.83 L799.75 1449.41 L797.59 1446.75 L800.15 1444.19 L802.81 1446.35 Z M803.40 1455.00 A5 5 0 1 0 813.40 1455.00 A5 5 0 1 0 803.40 1455.00 Z"/></svg>
<div class="abs" style="left:879px;top:1642px;width:630px;height:11px;border-radius:5.500px;background:#fff"></div>
<svg class="abs" style="left:2336px;top:1618px" width="52" height="50" viewBox="2336 1618 52 50"><path d="M2350 1653 C2362.500 1653 2373 1645.500 2373.300 1632" fill="none" stroke="#e8e8e8" stroke-width="10" stroke-linecap="round"/></svg>
<!--/OVERLAY-->
</div>
</body>
</html>
